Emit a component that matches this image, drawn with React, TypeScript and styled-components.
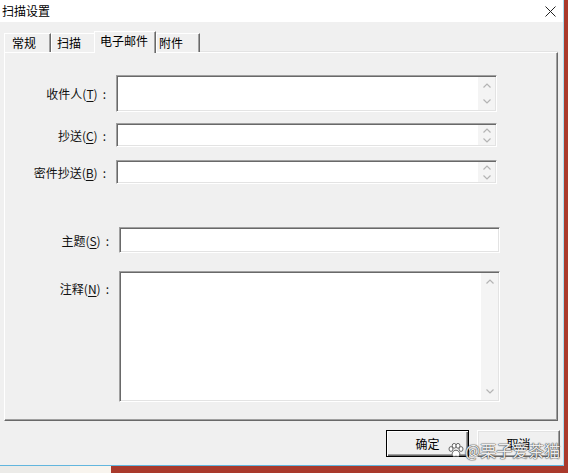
import React from "react";
import styled, { createGlobalStyle } from "styled-components";

const GlobalStyle = createGlobalStyle`
  html, body { margin: 0; padding: 0; }
  body {
    background: #a93a2c;
    font-family: "Noto Sans CJK SC", "Microsoft YaHei", sans-serif;
    font-size: 12px;
    color: #000;
  }
`;

const Desktop = styled.div`
  width: 568px;
  height: 473px;
  overflow: hidden;
  display: grid;
  grid-template-columns: 564px 4px;
  grid-template-rows: 466px 7px;
  background: #a93a2c;
`;

const Window = styled.div`
  position: relative;
  display: flex;
  flex-direction: column;
  background: #f0f0f0;
  border-right: 1px solid #a8dcef;
  border-bottom: 1px solid #62b6de;
`;

const TitleBar = styled.div`
  height: 22px;
  flex: none;
  display: flex;
  align-items: center;
  justify-content: space-between;
  padding: 0 7px 0 2px;
  background: #fff;
  font-size: 12px;
  line-height: 22px;
`;

const Body = styled.div`
  flex: 1;
  display: flex;
  flex-direction: column;
  padding: 9px 0 0 4px;
`;

const TabStrip = styled.div`
  display: flex;
  align-items: flex-end;
  height: 22px;
  position: relative;
  z-index: 1;
  margin-bottom: -1px;
`;

const Tab = styled.div<{ $w: number; $pad: number; $active?: boolean; $shift?: number }>`
  box-sizing: border-box;
  width: ${(p) => p.$w}px;
  height: ${(p) => (p.$active ? 22 : 19)}px;
  margin-left: ${(p) => p.$shift ?? 0}px;
  margin-bottom: ${(p) => (p.$active ? 0 : 1)}px;
  padding-left: ${(p) => p.$pad}px;
  padding-bottom: ${(p) => (p.$active ? 3 : 0)}px;
  display: flex;
  align-items: center;
  background: #f0f0f0;
  border-top: 1px solid #fff;
  border-left: 1px solid #fff;
  border-right: 1px solid #696969;
  box-shadow: inset -1px 0 0 #a0a0a0;
  line-height: 1;
  white-space: nowrap;
  position: relative;
  z-index: ${(p) => (p.$active ? 2 : 1)};
`;

const Panel = styled.div`
  box-sizing: border-box;
  width: 554px;
  height: 369px;
  flex: none;
  border-top: 1px solid #fff;
  border-left: 1px solid #fff;
  border-right: 1px solid #696969;
  border-bottom: 1px solid #696969;
  box-shadow: inset -1px -1px 0 #a0a0a0, 0 -1px 0 #e3e3e3;
  padding-top: 22px;
  display: flex;
  flex-direction: column;
`;

const FieldRow = styled.div<{ $mt?: number; $top?: boolean }>`
  display: flex;
  align-items: ${(p) => (p.$top ? "flex-start" : "center")};
  margin-top: ${(p) => p.$mt ?? 0}px;
`;

const Label = styled.div<{ $w: number; $top?: boolean }>`
  box-sizing: border-box;
  width: ${(p) => p.$w}px;
  flex: none;
  padding-top: ${(p) => (p.$top ? 9 : 0)}px;
  padding-right: 10px;
  text-align: right;
  white-space: nowrap;
  line-height: 17px;
  color: #111;
`;

const Colon = styled.span`
  display: inline-block;
  margin-left: 5px;
`;

const Key = styled.span`
  text-decoration: underline;
  text-underline-offset: 2px;
`;

const Field = styled.div<{ $h: number }>`
  box-sizing: border-box;
  width: 381px;
  height: ${(p) => p.$h}px;
  display: flex;
  background: #fff;
  border-top: 1px solid #a0a0a0;
  border-left: 1px solid #a0a0a0;
  border-right: 1px solid #fff;
  border-bottom: 1px solid #fff;
  box-shadow: inset 1px 1px 0 #696969, inset -1px -1px 0 #e3e3e3;
  padding: 1px;
`;

const Entry = styled.div`
  flex: 1;
`;

const ScrollTrack = styled.div<{ $compact?: boolean }>`
  width: 17px;
  flex: none;
  background: #f4f4f4;
  display: flex;
  flex-direction: column;
  justify-content: ${(p) => (p.$compact ? "center" : "space-between")};
`;

const Arrow = styled.div<{ $compact?: boolean }>`
  height: ${(p) => (p.$compact ? 10 : 17)}px;
  display: flex;
  align-items: center;
  justify-content: center;
`;

const ButtonRow = styled.div`
  display: flex;
  justify-content: flex-end;
  gap: 8px;
  padding: 9px 3px 0 0;
`;

const DialogButton = styled.button<{ $default?: boolean }>`
  box-sizing: border-box;
  width: 83px;
  height: 27px;
  padding: 0;
  font-family: inherit;
  font-size: 12px;
  color: #000;
  background: #f0f0f0;
  border: 1px solid;
  border-color: ${(p) => (p.$default ? "#000" : "#fff #696969 #696969 #fff")};
  box-shadow: ${(p) =>
    p.$default
      ? "inset 1px 1px 0 #fff, inset -1px -1px 0 #696969, inset -2px -2px 0 #a0a0a0"
      : "inset -1px -1px 0 #a0a0a0, inset 1px 1px 0 #e3e3e3"};
`;

/* account mark floating over the dialog's lower-right corner */
const Watermark = styled.div`
  position: absolute;
  left: 448px;
  top: 441px;
  display: flex;
  align-items: center;
  gap: 1px;
  font-size: 16px;
  line-height: 18px;
  color: rgba(255, 255, 255, 0.92);
  text-shadow: 0 0 1px #444, 0 0 1px #444, 0 0 1.5px #666;
  white-space: nowrap;
  pointer-events: none;
  z-index: 5;
`;

const Taskbar = styled.div`
  grid-column: 1 / span 2;
  display: flex;
  background: #a93a2c;
`;

const TaskPiece = styled.div<{ $w: number; $bg: string }>`
  width: ${(p) => p.$w}px;
  background: ${(p) => p.$bg};
`;

const Chevron = ({ up }: { up?: boolean }) => (
  <svg width="8" height="5" viewBox="0 0 8 5">
    <polyline
      points={up ? "0.5,4.5 4,1 7.5,4.5" : "0.5,0.5 4,4 7.5,0.5"}
      fill="none"
      stroke="#b4b4b4"
      strokeWidth="1.2"
    />
  </svg>
);

const Scroller = ({ compact }: { compact?: boolean }) => (
  <ScrollTrack $compact={compact}>
    <Arrow $compact={compact}>
      <Chevron up />
    </Arrow>
    <Arrow $compact={compact}>
      <Chevron />
    </Arrow>
  </ScrollTrack>
);

const CloseIcon = () => (
  <svg width="11" height="11" viewBox="0 0 11 11">
    <path d="M0.5 0.5 L10.5 10.5 M10.5 0.5 L0.5 10.5" stroke="#222" strokeWidth="1" />
  </svg>
);

const PawIcon = () => (
  <svg width="16" height="15" viewBox="0 0 16 15">
    <g fill="#fff" stroke="#555" strokeWidth="0.9">
      <ellipse cx="3" cy="6" rx="2" ry="2.4" />
      <ellipse cx="6.2" cy="2.8" rx="2" ry="2.4" />
      <ellipse cx="10" cy="2.8" rx="2" ry="2.4" />
      <ellipse cx="13" cy="6" rx="2" ry="2.4" />
      <path d="M8 7.2 C5 7.2 3.6 10.5 4.4 12.4 C5.2 14 7 13.2 8 13.2 C9 13.2 10.8 14 11.6 12.4 C12.4 10.5 11 7.2 8 7.2 Z" />
    </g>
  </svg>
);

export default function App() {
  return (
    <>
      <GlobalStyle />
      <Desktop>
        <Window>
          <TitleBar>
            <span>扫描设置</span>
            <CloseIcon />
          </TitleBar>
          <Body>
            <TabStrip>
              <Tab $w={47} $pad={7}>常规</Tab>
              <Tab $w={45} $pad={5}>扫描</Tab>
              <Tab $w={62} $pad={5} $shift={-2} $active>
                电子邮件
              </Tab>
              <Tab $w={44} $pad={2}>附件</Tab>
            </TabStrip>
            <Panel>
              <FieldRow>
                <Label $w={111}>
                  收件人(<Key>T</Key>)<Colon>:</Colon>
                </Label>
                <Field $h={37}>
                  <Entry />
                  <Scroller />
                </Field>
              </FieldRow>
              <FieldRow $mt={11}>
                <Label $w={111}>
                  抄送(<Key>C</Key>)<Colon>:</Colon>
                </Label>
                <Field $h={24}>
                  <Entry />
                  <Scroller compact />
                </Field>
              </FieldRow>
              <FieldRow $mt={13}>
                <Label $w={111}>
                  密件抄送(<Key>B</Key>)<Colon>:</Colon>
                </Label>
                <Field $h={24}>
                  <Entry />
                  <Scroller compact />
                </Field>
              </FieldRow>
              <FieldRow $mt={43}>
                <Label $w={114}>
                  主题(<Key>S</Key>)<Colon>:</Colon>
                </Label>
                <Field $h={26}>
                  <Entry />
                </Field>
              </FieldRow>
              <FieldRow $mt={18} $top>
                <Label $w={114} $top>
                  注释(<Key>N</Key>)<Colon>:</Colon>
                </Label>
                <Field $h={131}>
                  <Entry />
                  <Scroller />
                </Field>
              </FieldRow>
            </Panel>
            <ButtonRow>
              <DialogButton $default>确定</DialogButton>
              <DialogButton>取消</DialogButton>
            </ButtonRow>
          </Body>
          <Watermark>
            <PawIcon />
            <span>@栗子爱茶猫</span>
          </Watermark>
        </Window>
        <div />
        <Taskbar>
          <TaskPiece $w={70} $bg="#ecebe8" />
          <TaskPiece $w={41} $bg="#f8f4ee" />
        </Taskbar>
      </Desktop>
    </>
  );
}
